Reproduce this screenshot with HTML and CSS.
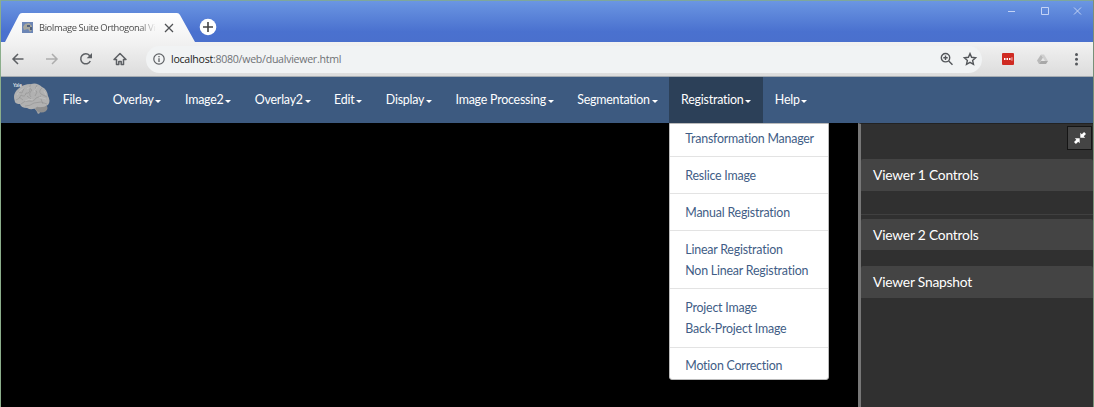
FILE: index.html
```html
<!DOCTYPE html>
<html lang="en">
<head>
<meta charset="utf-8">
<title>BioImage Suite Orthogonal Viewer</title>
<link rel="stylesheet" href="styles.css">
</head>
<body>
<div class="window">
  <header class="titlebar">
    <div class="tab">
      <svg class="tab-shape" width="190" height="29" viewBox="0 0 190 29"><defs><linearGradient id="tabfill" x1="0" y1="0" x2="0" y2="1"><stop offset="0" stop-color="#fff"/><stop offset="1" stop-color="#f2f2f2"/></linearGradient></defs><path d="M0 29 14 2Q15 0 17 0H172Q174 0 175 2L190 29Z" fill="url(#tabfill)"/></svg>
      <div class="tab-content">
        <svg class="favicon" width="11" height="11" viewBox="0 0 11 11"><path fill="#6c86b6" d="M0 0h11v11H0z"/><path fill="#a6a79f" d="M1 5 3 2 7 1l3 3v4L8 10 6 7 2 8Z"/><path fill="#52627e" d="M5 3h3v2H5zM8 5h2v3H8z"/></svg>
        <span class="tab-title">BioImage Suite Orthogonal Vie</span>
        <svg class="tab-close" width="10" height="10" viewBox="0 0 10 10"><path d="m1 1 8 8M9 1 1 9" stroke="#505255" stroke-width="1.25"/></svg>
      </div>
    </div>
    <svg class="newtab" width="18" height="18" viewBox="0 0 18 18"><circle cx="9" cy="9" r="8.300" fill="#fff"/><path d="M4 9h10M9 4v10" stroke="#444" stroke-width="1.600"/></svg>
    <svg class="controls" width="76" height="10" viewBox="0 0 76 10" fill="none" stroke="#c3d3f5" stroke-width="1"><path d="M1 5.500h7M67 1.500l7 7M74 1.500l-7 7"/><path d="M34.500 1.500h7v7h-7z"/></svg>
  </header>
  <div class="toolbar">
    <svg class="nav-icons" width="120" height="16" viewBox="0 0 120 16" fill="none" stroke="#5d6064" stroke-width="1.500"><path d="M12.500 8H2M7 3 2 8l5 5"/><path stroke="#adadad" d="M35 8h11M41 3l5 5-5 5"/><path d="M79.300 10A5 5 0 1 1 78.500 4.500L80 6"/><path fill="#5d6064" stroke="none" d="M81 2v5.300h-5.300z"/><path d="M103 8.500h2.500v5h2.300v-3h2.400v3h2.300v-5h2.500L109 2.500Z" stroke-linejoin="round"/></svg>
    <div class="address">
      <svg class="info" width="12" height="12" viewBox="0 0 12 12"><circle cx="6" cy="6" r="5.200" fill="none" stroke="#5d6064" stroke-width="1.200"/><path d="M6 5.300V9M6 3v1.300" stroke="#5d6064" stroke-width="1.300"/></svg>
      <div class="url"><b>localhost</b>:8080/web/dualviewer.html</div>
      <svg class="find" width="38" height="14" viewBox="0 0 38 14" fill="none" stroke="#54575b" stroke-width="1.400"><circle cx="5.500" cy="5.700" r="4.200"/><path d="m8.700 8.900 3.800 3.800M3.300 5.700h4.400M5.500 3.500v4.400"/><path d="m30 1.600 1.600 3.700 4 .4-3 2.700.9 4-3.500-2.100-3.500 2.100.9-4-3-2.700 4-.4Z"/></svg>
    </div>
    <svg class="extensions" width="80" height="14" viewBox="0 0 80 14"><rect y="1" width="12" height="12" rx="1" fill="#cf2a22"/><path d="M2 6h1.500v2H2zm2.500 0H6v2H4.500zM7 6h1.500v2H7zm2.600-.8h.7v3.600h-.7z" fill="#fff"/><path d="m39 2.500-4 6 2 3.500 4-6.500Z" fill="#b9b9b9"/><path d="M39 2.500h3l4 6.500h-3Z" fill="#cfcfcf"/><path d="M37 12h7l2-3h-7Z" fill="#a8a8a8"/><g fill="#54575b"><circle cx="74.500" cy="2.500" r="1.500"/><circle cx="74.500" cy="7.200" r="1.500"/><circle cx="74.500" cy="12" r="1.500"/></g></svg>
  </div>
  <nav class="navbar">
    <svg class="brain" width="38" height="36" viewBox="0 0 38 36">
      <path d="M21 26q3 3 4 6l2-1-2-6Z" fill="#a3a3a3"/>
      <ellipse cx="28.500" cy="26" rx="6" ry="4.500" fill="#8f8f8f"/>
      <path d="M2 20Q-1 12 5 7 10 2 18 2q6-2 11 3 5 2 6 9 3 5 0 9-5 3-11 2-5 4-10 1-6 0-7-4-4 0-5-2Z" fill="#b1b1b1"/>
      <g fill="none" stroke="#909090" stroke-width=".6"><path d="M3 18q4-1 5-5 4 3 5-2 4 1 4-4M8 22q4-4 8-3 5 1 7-3l5-2M12 24q5 0 9-3l7-1 6 2M18 2q-3 4 1 6-4 4-1 7M24 3q-3 5 0 7l-2 4M29 6q-4 3-1 6l6 3M5 10l4 1 2-5M28 17l2 5M6 15l4 3M14 14l4 3M24 25q3 2 9 1M25 28l7-1"/></g>
      <g fill="none" stroke="#c8c8c8" stroke-width=".6"><path d="M4 13q2-5 7-7M14 7l3-2M12 19q5-3 8-1M21 10l3-5M26 15l7 2M31 9l2 4"/></g>
      <text x="0" y="4.800" class="logo-text">Yale</text>
    </svg>
    <ul class="menu">
      <li>File<i></i></li><li>Overlay<i></i></li><li>Image2<i></i></li><li>Overlay2<i></i></li><li>Edit<i></i></li><li>Display<i></i></li><li>Image Processing<i></i></li><li>Segmentation<i></i></li>
      <li class="open">Registration<i></i>
        <div class="dropdown">
          <a>Transformation Manager</a><hr>
          <a>Reslice Image</a><hr>
          <a>Manual Registration</a><hr>
          <a>Linear Registration</a><a>Non Linear Registration</a><hr>
          <a>Project Image</a><a>Back-Project Image</a><hr>
          <a>Motion Correction</a>
        </div>
      </li>
      <li>Help<i></i></li>
    </ul>
  </nav>
  <main class="viewer">
    <aside class="sidebar">
      <div class="side-top"><div class="collapse"><svg width="12" height="12" viewBox="0 0 12 12"><path d="M6.300.8v4.900h4.900L9.700 4.200 12 1.900 10.100 0 7.800 2.300ZM5.700 11.200V6.300H.8l1.500 1.500L0 10.100 1.900 12l2.300-2.300Z" fill="#fff"/></svg></div></div>
      <section class="panel first"><h2>Viewer 1 Controls</h2></section>
      <section class="panel second"><h2>Viewer 2 Controls</h2></section>
      <section class="panel"><h2>Viewer Snapshot</h2></section>
    </aside>
  </main>
</div>
</body>
</html>
```
FILE: styles.css
```css
* { box-sizing: border-box; }
body { margin: 0; background: #000; font-family: Lato, sans-serif; }
svg { display: block; flex: none; }
.window { width: 1094px; height: 407px; display: flex; flex-direction: column; overflow: hidden; border-left: 1px solid #8bae8b; border-right: 1px solid #789078; }
.titlebar { height: 42px; flex: none; display: flex; border-top: 1px solid #7fa79b; background: linear-gradient(#6b96e2, #4a71cf 75%, #4a70cd); padding: 12px 0 0 4px; }
.tab { width: 190px; height: 29px; display: grid; }
.tab-shape, .tab-content { grid-area: 1 / 1; }
.tab-content { display: flex; align-items: center; padding: 0 0 0 17px; z-index: 1; }
.tab-title { width: 117px; margin-left: 6px; white-space: nowrap; font: 9.4px/14px "Open Sans", sans-serif; letter-spacing: -.42px; color: #4c4c4c; -webkit-mask-image: linear-gradient(90deg, #000 86%, transparent); mask-image: linear-gradient(90deg, #000 86%, transparent); }
.tab-close { margin-left: 8px; }
.newtab { margin: 5px 0 0 4px; }
.controls { margin: -7px 10px 0 auto; }
.toolbar { height: 35px; flex: none; display: flex; align-items: center; background: linear-gradient(#f2f2f2, #dcdcdc); border-bottom: 1px solid #a6acb2; padding: 0 11px 0 10px; }
.address { width: 837px; height: 27px; margin-left: 15px; display: flex; align-items: center; padding: 0 4px 0 7px; border-radius: 14px; background: #f1f3f4; }
.url { margin-left: 6px; font: 10.6px/16px "Open Sans", sans-serif; letter-spacing: -.27px; color: #6f7276; white-space: nowrap; }
.url b { font-weight: 400; color: #222; }
.find { margin-left: auto; }
.extensions { margin-left: 20px; }
.navbar { height: 46px; flex: none; display: flex; background: #3d5a80; }
.brain { margin: 5px 0 0 12px; }
.logo-text { font: 5px Lato, sans-serif; fill: #fff; }
.menu { display: flex; list-style: none; margin: 0; padding: 0; }
.menu li { position: relative; display: flex; align-items: center; height: 46px; padding: 0 11.8px 1px; color: #fff; font-size: 12.4px; letter-spacing: -.21px; line-height: 16px; white-space: nowrap; font-variant-ligatures: none; }
.menu i { margin: 3px 0 0 1.7px; border: 3px solid transparent; border-top-color: #fff; border-bottom: 0; }
.menu .open { background: #2c4058; }
.dropdown { position: absolute; z-index: 5; top: 46px; left: 0; width: 160px; height: 257px; padding: 4px 0; background: #fff; border: 1px solid #bbb; border-radius: 0 0 3px 3px; }
.dropdown a { display: block; padding: 0 15px; height: 21.4px; line-height: 21.4px; color: #3f5d86; }
.dropdown hr { margin: 7px 0 7.5px; border: 0; height: 1px; background: #e3e3e3; }
.viewer { flex: 1; display: flex; justify-content: flex-end; background: #000; }
.sidebar { width: 235px; border-left: 3px solid #777; border-top: 1px solid #222; background: #303030; }
.side-top { height: 35px; display: flex; justify-content: flex-end; padding: 2px 1px 1px; }
.collapse { width: 25px; height: 24px; display: flex; align-items: center; justify-content: center; background: #444; border: 1px solid #151515; }
.panel { height: 32px; }
.panel h2 { margin: 0; height: 32px; padding-left: 12px; font-size: 13.8px; letter-spacing: -.2px; line-height: 32px; font-weight: 400; color: #fff; background: #444; border-radius: 2px 2px 0 0; }
.first { height: 56px; margin-bottom: 4px; border-bottom: 1px solid #404040; }
.second { height: 47px; }
.second h2 { height: 31px; }
```
